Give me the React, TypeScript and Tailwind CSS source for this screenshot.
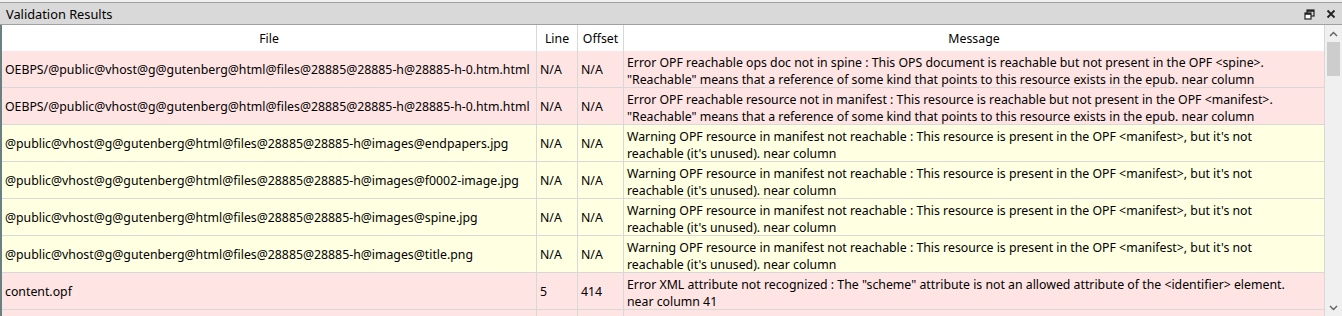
import React from 'react';

type Row = {
  file: string;
  line: string;
  offset: string;
  msg: [string, string];
  kind: 'error' | 'warning';
};

const rows: Row[] = [
  {
    file: 'OEBPS/@public@vhost@g@gutenberg@html@files@28885@28885-h@28885-h-0.htm.html',
    line: 'N/A',
    offset: 'N/A',
    msg: [
      'Error OPF reachable ops doc not in spine : This OPS document is reachable but not present in the OPF <spine>.',
      '"Reachable" means that a reference of some kind that points to this resource exists in the epub. near column',
    ],
    kind: 'error',
  },
  {
    file: 'OEBPS/@public@vhost@g@gutenberg@html@files@28885@28885-h@28885-h-0.htm.html',
    line: 'N/A',
    offset: 'N/A',
    msg: [
      'Error OPF reachable resource not in manifest : This resource is reachable but not present in the OPF <manifest>.',
      '"Reachable" means that a reference of some kind that points to this resource exists in the epub. near column',
    ],
    kind: 'error',
  },
  {
    file: '@public@vhost@g@gutenberg@html@files@28885@28885-h@images@endpapers.jpg',
    line: 'N/A',
    offset: 'N/A',
    msg: [
      "Warning OPF resource in manifest not reachable : This resource is present in the OPF <manifest>, but it's not",
      "reachable (it's unused). near column",
    ],
    kind: 'warning',
  },
  {
    file: '@public@vhost@g@gutenberg@html@files@28885@28885-h@images@f0002-image.jpg',
    line: 'N/A',
    offset: 'N/A',
    msg: [
      "Warning OPF resource in manifest not reachable : This resource is present in the OPF <manifest>, but it's not",
      "reachable (it's unused). near column",
    ],
    kind: 'warning',
  },
  {
    file: '@public@vhost@g@gutenberg@html@files@28885@28885-h@images@spine.jpg',
    line: 'N/A',
    offset: 'N/A',
    msg: [
      "Warning OPF resource in manifest not reachable : This resource is present in the OPF <manifest>, but it's not",
      "reachable (it's unused). near column",
    ],
    kind: 'warning',
  },
  {
    file: '@public@vhost@g@gutenberg@html@files@28885@28885-h@images@title.png',
    line: 'N/A',
    offset: 'N/A',
    msg: [
      "Warning OPF resource in manifest not reachable : This resource is present in the OPF <manifest>, but it's not",
      "reachable (it's unused). near column",
    ],
    kind: 'warning',
  },
  {
    file: 'content.opf',
    line: '5',
    offset: '414',
    msg: [
      'Error XML attribute not recognized : The "scheme" attribute is not an allowed attribute of the <identifier> element.',
      'near column 41',
    ],
    kind: 'error',
  },
  {
    file: '',
    line: '',
    offset: '',
    msg: ['', ''],
    kind: 'error',
  },
];

const cols = 'grid grid-cols-[535px_41px_46px_1fr]';
const cell = 'border-r border-[#d8d8d8] px-[3px] pt-[3px] flex items-center overflow-hidden whitespace-nowrap';

export default function App() {
  return (
    <div
      className="h-screen w-full overflow-hidden bg-[#f0f0f0] pt-[2px] text-[12.3px] text-black"
      style={{ fontFamily: '"Noto Sans", "Open Sans", sans-serif' }}
    >
      {/* Title bar */}
      <div className="flex h-[23px] items-center justify-between border-y border-[#a0a0a0] bg-[#d9d9d9] pl-[6px] pr-[6px]">
        <span className="pt-[2px] text-[12.8px]">Validation Results</span>
        <div className="flex items-center gap-[11px] pt-[1px]">
          <svg width="11" height="11" viewBox="0 0 11 11">
            <rect x="3" y="1" width="7" height="6" fill="none" stroke="#222" strokeWidth="1.2" />
            <rect x="3" y="1" width="7" height="1.8" fill="#222" />
            <rect x="1" y="4" width="6" height="6" fill="#fff" stroke="#222" strokeWidth="1.2" />
            <rect x="1" y="4" width="6" height="1.8" fill="#222" />
          </svg>
          <svg width="10" height="10" viewBox="0 0 10 10">
            <path d="M1.5 1.5 L8.5 8.5 M8.5 1.5 L1.5 8.5" stroke="#222" strokeWidth="1.8" />
          </svg>
        </div>
      </div>

      {/* Body */}
      <div className="flex h-[291px]">
        <div className="w-[2px] bg-[#6d7f7e]" />
        <div className="flex-1 overflow-hidden bg-white">
          <div className={`${cols} h-[26px]`}>
            <div className={`${cell} justify-center`}>File</div>
            <div className={`${cell} justify-center`}>Line</div>
            <div className={`${cell} justify-center`}>Offset</div>
            <div className={`${cell} justify-center`}>Message</div>
          </div>
          {rows.map((r, i) => (
            <div
              key={i}
              className={`${cols} h-[37px] border-b border-[#d8d8d8] ${
                r.kind === 'error' ? 'bg-[#ffe4e4]' : 'bg-[#ffffe1]'
              }`}
            >
              <div className={cell}>{r.file}</div>
              <div className={cell}>{r.line}</div>
              <div className={cell}>{r.offset}</div>
              <div className={`${cell} flex-col !items-start justify-center leading-[17px]`}>
                <span>{r.msg[0]}</span>
                <span>{r.msg[1]}</span>
              </div>
            </div>
          ))}
        </div>

        {/* Scrollbar */}
        <div className="flex w-[17px] flex-col items-center bg-[#f0f0f0]">
          <div className="flex h-[17px] w-full items-center justify-center">
            <svg width="9" height="6" viewBox="0 0 9 6">
              <path d="M1 5 L4.5 1.5 L8 5" fill="none" stroke="#606060" strokeWidth="1.4" />
            </svg>
          </div>
          <div className="h-[34px] w-[13px] bg-[#cdcdcd]" />
          <div className="flex-1" />
          <div className="flex h-[17px] w-full items-center justify-center">
            <svg width="9" height="6" viewBox="0 0 9 6">
              <path d="M1 1 L4.5 4.5 L8 1" fill="none" stroke="#606060" strokeWidth="1.4" />
            </svg>
          </div>
        </div>
      </div>
    </div>
  );
}
